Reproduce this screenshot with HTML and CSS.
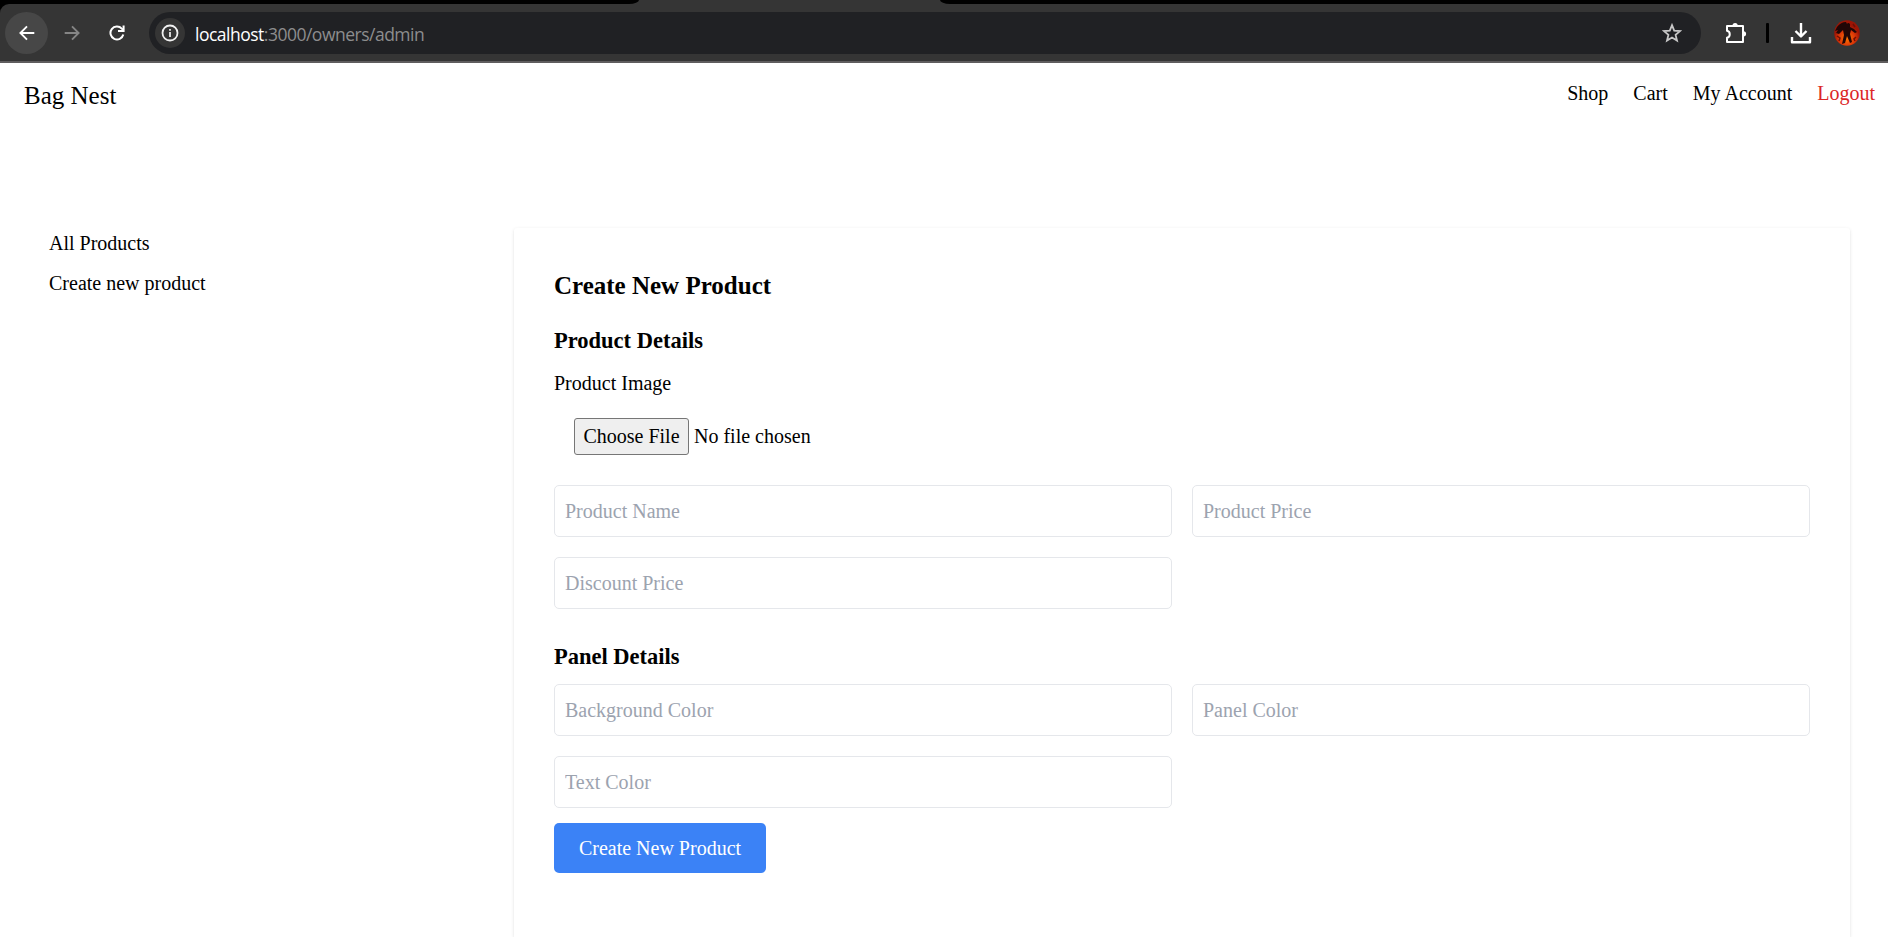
FILE: index.html
```html
<!DOCTYPE html>
<html lang="en">
<head>
<meta charset="utf-8">
<title>Bag Nest</title>
<link rel="stylesheet" href="styles.css">
</head>
<body>
<div class="tabstrip"><span class="tab-side tab-side-left"></span><span class="tab-side tab-side-right"></span></div>
<div class="toolbar-frame">
<div class="toolbar">
  <span class="tool back"><svg width="16" height="16" viewBox="0 0 16 16"><path d="M15.3 8H1.6M8 1.3 1.4 8 8 14.7" fill="none" stroke="#fff" stroke-width="1.9"/></svg></span>
  <span class="tool forward"><svg width="16" height="16" viewBox="0 0 16 16"><path d="M.7 8h13.7M8 1.3 14.6 8 8 14.7" fill="none" stroke="#858585" stroke-width="1.9"/></svg></span>
  <span class="tool reload"><svg width="16" height="16" viewBox="0 0 16 16"><path d="M14.3 9.500A6.500 6.500 0 1 1 12.800 3.600L14.500 5.400" fill="none" stroke="#fff" stroke-width="2"/><path d="M14.600.5v5.600H9" fill="none" stroke="#fff" stroke-width="2"/></svg></span>
  <div class="omnibox">
    <span class="info"><svg width="18" height="18" viewBox="0 0 18 18"><circle cx="9" cy="9" r="7.5" fill="none" stroke="#f0f0f0" stroke-width="1.8"/><path d="M9 8v5M9 5v1.800" stroke="#e8e8e8" stroke-width="1.800"/></svg></span>
    <span class="url"><span class="host">localhost</span><span class="path">:3000/owners/admin</span></span>
    <svg class="star" width="20" height="20" viewBox="0 0 20 20"><path d="m10 2.200 2.200 5.400 5.800.5-4.400 3.800 1.400 5.700-5-3.100-5 3.100 1.400-5.700L2 8.100l5.800-.5z" fill="none" stroke="#c7c7c7" stroke-width="1.800"/></svg>
  </div>
  <svg class="puzzle" width="22" height="22" viewBox="0 0 22 22"><path d="M2 4h16v16H2v-4.200a3.600 3.600 0 0 0 0-7z" fill="none" stroke="#fff" stroke-width="2" stroke-linejoin="round"/><path d="M7.500 3.500a2.600 2.600 0 0 1 5.200 0zM18.500 9.200a2.600 2.600 0 0 1 0 5.200z" fill="#fff"/></svg>
  <span class="divider"></span>
  <svg class="download" width="22" height="22" viewBox="0 0 22 22"><path d="M11 1v13M5.500 9l5.500 5.500L16.500 9M2 15v5.200h18V15" fill="none" stroke="#fff" stroke-width="2.400" stroke-linejoin="round"/></svg>
  <svg class="avatar" width="26" height="26" viewBox="0 0 26 26"><defs><radialGradient id="glow" cy=".7"><stop offset="0" stop-color="#ff7a00"/><stop offset=".6" stop-color="#dc3808"/><stop offset="1" stop-color="#9c1505"/></radialGradient></defs><circle cx="13" cy="13" r="12.8" fill="url(#glow)"/><path d="M3 7q4-5 9-5l1 2q1-2 3 0v3l4 2 3 3-2 1-4-3-1 4 2 8-2 1-3-7-2 7-3 1 2-9-1-5-4 4-3-1 2-3-3 1z" fill="#200606"/><path d="m3 16 3 2-1 3M22 17l-2 2 1 2M19 4l2 3" fill="none" stroke="#701005" stroke-width="1.5"/></svg>
</div>
</div>
<header class="nav">
  <a class="brand">Bag Nest</a>
  <nav class="links"><a>Shop</a><a>Cart</a><a>My Account</a><a class="logout">Logout</a></nav>
</header>
<main class="main">
  <aside class="sidebar"><a>All Products</a><a>Create new product</a></aside>
  <section class="panel">
    <h2>Create New Product</h2>
    <form>
      <h3>Product Details</h3>
      <label class="file-label">Product Image</label>
      <div class="file"><span class="file-button">Choose File</span><span>No file chosen</span></div>
      <div class="grid">
        <input type="text" placeholder="Product Name">
        <input type="text" placeholder="Product Price">
        <input type="text" placeholder="Discount Price">
      </div>
      <h3 class="panel-title">Panel Details</h3>
      <div class="grid">
        <input type="text" placeholder="Background Color">
        <input type="text" placeholder="Panel Color">
        <input type="text" placeholder="Text Color">
      </div>
      <button class="submit" type="button">Create New Product</button>
    </form>
  </section>
</main>
</body>
</html>
```
FILE: styles.css
```css
* { box-sizing: border-box; }
body {
  margin: 0;
  height: 937px;
  overflow: hidden;
  display: flex;
  flex-direction: column;
  background: #fff;
  color: #000;
  font: 20px/30px "Liberation Serif", serif;
}
h2, h3 { margin: 0; }

/* browser bar */
.tabstrip {
  height: 4px;
  flex: none;
  display: flex;
  justify-content: space-between;
  background: #353535;
}
.tab-side { background: #000; }
.tab-side-left { width: 639px; border-bottom-right-radius: 10px 4px; }
.tab-side-right { width: 948px; border-bottom-left-radius: 10px 4px; }
.toolbar-frame { flex: none; background: #000; }
.toolbar {
  height: 59px;
  display: flex;
  align-items: center;
  padding: 1px 28px 0 5px;
  border-top-left-radius: 9px;
  background: #353535;
  box-shadow: inset 0 -2px #5f5d5e;
}
.tool {
  width: 43px;
  height: 42px;
  flex: none;
  display: flex;
  align-items: center;
  justify-content: center;
}
.toolbar > * { margin-bottom: 2px; }
.back { border-radius: 50%; background: #474747; }
.forward { margin-left: 2px; }
.reload { margin-left: 2px; }
.omnibox {
  width: 1552px;
  height: 42px;
  margin-left: 11px;
  flex: none;
  display: flex;
  align-items: center;
  padding: 0 19px 0 6px;
  border-radius: 21px;
  background: #202124;
}
.info {
  width: 30px;
  height: 30px;
  display: flex;
  align-items: center;
  justify-content: center;
  border-radius: 50%;
  background: #353535;
}
.url {
  margin-left: 10px;
  padding-top: 2px;
  font: 17.5px/26px "Open Sans", sans-serif;
  white-space: nowrap;
}
.host { color: #fff; letter-spacing: -.5px; }
.path { color: #8d8d8e; letter-spacing: -.5px; }
.star { margin-left: auto; }
.puzzle { margin-left: 24px; }
.divider { width: 3px; height: 20px; margin-left: 19px; border-radius: 1px; background: #000; }
.download { margin-left: 21px; }
.avatar { margin-left: 22px; }

/* site header */
.nav {
  flex: none;
  height: 165px;
  display: flex;
  justify-content: space-between;
  align-items: flex-start;
  padding: 15px 13px 0 24px;
}
.brand { font-size: 25px; line-height: 35px; }
.links { display: flex; gap: 25px; }
.logout { color: #dc2626; }

/* content */
.main { display: flex; flex: 1; min-height: 0; }
.sidebar {
  width: 514px;
  display: flex;
  flex-direction: column;
  gap: 10px;
  padding-left: 49px;
}
.panel {
  width: 1336px;
  padding: 40px;
  border-radius: 3px 3px 0 0;
  background: #fff;
  box-shadow: 0 1.25px 3.75px rgba(0, 0, 0, .1), 0 1.25px 2.5px -1.25px rgba(0, 0, 0, .1);
}
.panel h2 { margin-bottom: 20px; font-size: 25px; line-height: 35px; }
.panel h3 { margin-bottom: 10px; font-size: 22.5px; line-height: 35px; }
.file-label { display: block; }
.file {
  display: flex;
  align-items: center;
  gap: 5px;
  margin: 20px 0 30px 20px;
  line-height: 37px;
}
.file-button {
  width: 115px;
  height: 37px;
  border: 1px solid #767676;
  border-radius: 3px;
  background: #efefef;
  line-height: 35px;
  text-align: center;
}
.grid { display: grid; grid-template-columns: 1fr 1fr; gap: 20px; }
.grid input {
  width: 100%;
  height: 52px;
  padding: 0 10px;
  border: 1px solid #e5e7eb;
  border-radius: 5px;
  background: transparent;
  font: inherit;
}
.grid input::placeholder { color: #9ca3af; opacity: 1; }
.panel .panel-title { margin-top: 30px; }
.submit {
  display: block;
  width: 212px;
  height: 50px;
  margin-top: 15px;
  padding: 0;
  border: 0;
  border-radius: 5px;
  background: #3b82f6;
  color: #fff;
  font: inherit;
}
```
